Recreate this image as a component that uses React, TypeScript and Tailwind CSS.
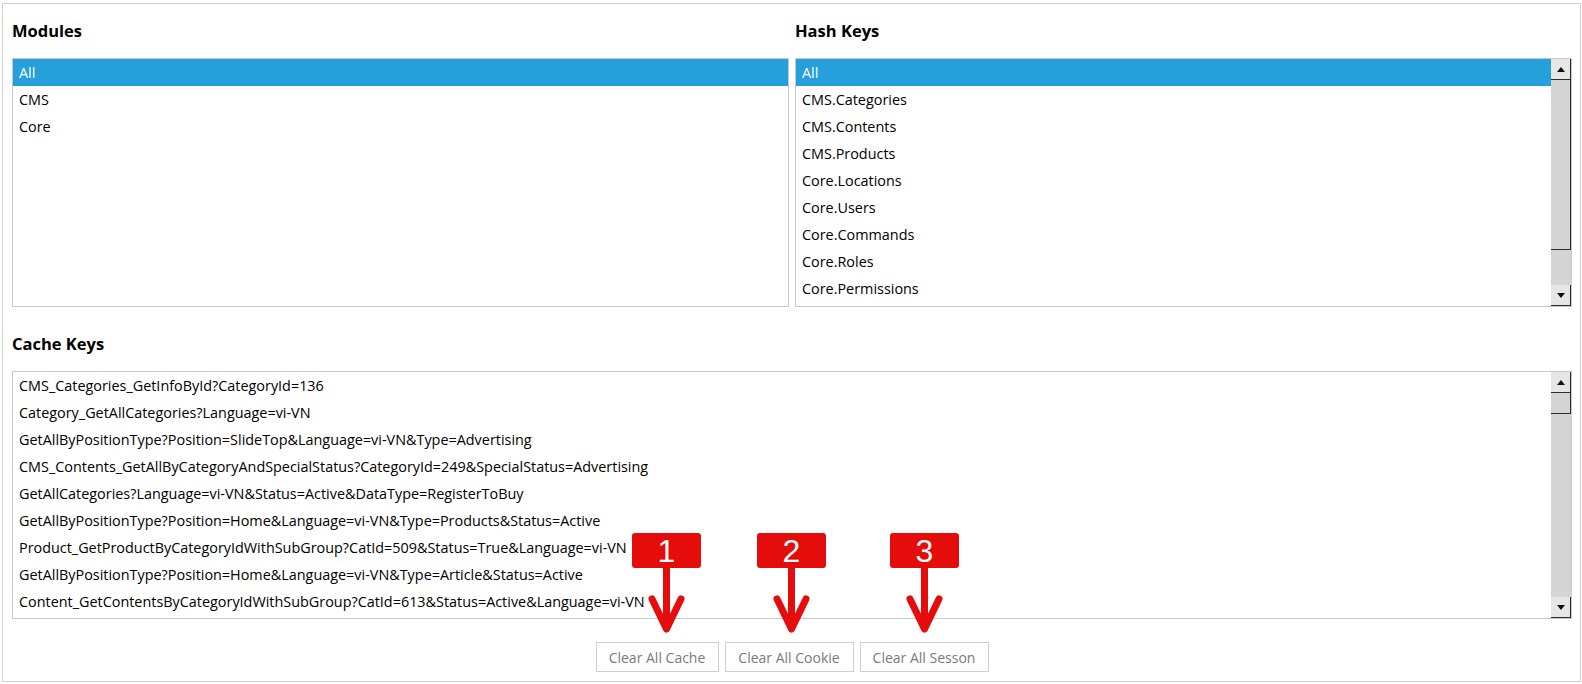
import React from "react";

const modules = ["All", "CMS", "Core"];

const hashKeys = [
  "All",
  "CMS.Categories",
  "CMS.Contents",
  "CMS.Products",
  "Core.Locations",
  "Core.Users",
  "Core.Commands",
  "Core.Roles",
  "Core.Permissions",
];

const cacheKeys = [
  "CMS_Categories_GetInfoById?CategoryId=136",
  "Category_GetAllCategories?Language=vi-VN",
  "GetAllByPositionType?Position=SlideTop&Language=vi-VN&Type=Advertising",
  "CMS_Contents_GetAllByCategoryAndSpecialStatus?CategoryId=249&SpecialStatus=Advertising",
  "GetAllCategories?Language=vi-VN&Status=Active&DataType=RegisterToBuy",
  "GetAllByPositionType?Position=Home&Language=vi-VN&Type=Products&Status=Active",
  "Product_GetProductByCategoryIdWithSubGroup?CatId=509&Status=True&Language=vi-VN",
  "GetAllByPositionType?Position=Home&Language=vi-VN&Type=Article&Status=Active",
  "Content_GetContentsByCategoryIdWithSubGroup?CatId=613&Status=Active&Language=vi-VN",
];

function Arrow({ up }: { up?: boolean }) {
  return (
    <svg width="8" height="5" viewBox="0 0 8 5">
      {up ? <polygon points="0,5 8,5 4,0" fill="#111" /> : <polygon points="0,0 8,0 4,5" fill="#111" />}
    </svg>
  );
}

function ScrollBar({ thumbClass }: { thumbClass: string }) {
  return (
    <div className="w-[20px] flex flex-col bg-[#d4d4d4]">
      <div className="h-[21px] flex items-center justify-center bg-[#e6e6e6] border-r border-b border-[#2b2b2b]">
        <Arrow up />
      </div>
      <div className="flex-1 flex flex-col">
        <div className={thumbClass + " bg-[#d4d4d4] border-r border-b border-[#2b2b2b]"} />
      </div>
      <div className="h-[21px] flex items-center justify-center bg-[#e6e6e6] border-r border-b border-[#2b2b2b]">
        <Arrow />
      </div>
    </div>
  );
}

function ListBox({
  items,
  selected,
  height,
  thumbClass,
}: {
  items: string[];
  selected?: number;
  height: string;
  thumbClass?: string;
}) {
  return (
    <div className={"border border-[#c9c9c9] flex " + height}>
      <div className="flex-1 overflow-hidden">
        {items.map((item, i) => (
          <div
            key={i}
            className={
              "h-[27px] leading-[27px] pl-[6px] whitespace-nowrap " +
              (i === selected ? "bg-[#25a0da] text-white" : "text-black")
            }
          >
            {item}
          </div>
        ))}
      </div>
      {thumbClass && <ScrollBar thumbClass={thumbClass} />}
    </div>
  );
}

function Badge({ n, className }: { n: string; className: string }) {
  return (
    <div className={"absolute " + className}>
      <div className="w-[69px] h-[35px] rounded-[3px] bg-[#e50c0c] text-white flex items-center justify-center text-[32px] leading-none font-['Liberation_Sans',Arial,sans-serif]">
        {n}
      </div>
      <svg width="69" height="66" viewBox="0 0 69 66" className="block">
        <g stroke="#e50c0c" strokeWidth="7" strokeLinecap="round" strokeLinejoin="round" fill="none">
          <line x1="34.5" y1="0" x2="34.5" y2="60" />
          <polyline points="20,31 34.5,61 49,31" />
        </g>
      </svg>
    </div>
  );
}

export default function App() {
  return (
    <div className="relative w-[1582px] h-[684px] bg-white pt-[3px] font-['Open_Sans',sans-serif] text-[14.4px]">
      <div className="ml-[2px] w-[1579px] h-[679px] border border-[#d2d2d2] pl-[9px] pr-[8px] flex flex-col">
        <div className="grid grid-cols-2 gap-[6px]">
          <div>
            <div className="h-[54px] flex items-end pb-[17px]">
              <h3 className="text-[16.5px] leading-[20px] font-bold text-black">Modules</h3>
            </div>
            <ListBox items={modules} selected={0} height="h-[249px]" />
          </div>
          <div>
            <div className="h-[54px] flex items-end pb-[17px]">
              <h3 className="text-[16.5px] leading-[20px] font-bold text-black">Hash Keys</h3>
            </div>
            <ListBox items={hashKeys} selected={0} height="h-[249px]" thumbClass="h-[170px]" />
          </div>
        </div>

        <div className="h-[64px] flex items-end pb-[17px]">
          <h3 className="text-[16.5px] leading-[20px] font-bold text-black">Cache Keys</h3>
        </div>
        <ListBox items={cacheKeys} height="h-[248px]" thumbClass="h-[21px]" />

        <div className="mt-[23px] flex justify-center gap-[6px]">
          <button className="h-[30px] w-[123px] border border-[#cfcfcf] bg-white text-[#7a7a7a] text-[14px]">
            Clear All Cache
          </button>
          <button className="h-[30px] w-[129px] border border-[#cfcfcf] bg-white text-[#7a7a7a] text-[14px]">
            Clear All Cookie
          </button>
          <button className="h-[30px] w-[129px] border border-[#cfcfcf] bg-white text-[#7a7a7a] text-[14px]">
            Clear All Sesson
          </button>
        </div>
      </div>

      <Badge n="1" className="left-[632px] top-[533px]" />
      <Badge n="2" className="left-[757px] top-[533px]" />
      <Badge n="3" className="left-[890px] top-[533px]" />
    </div>
  );
}
